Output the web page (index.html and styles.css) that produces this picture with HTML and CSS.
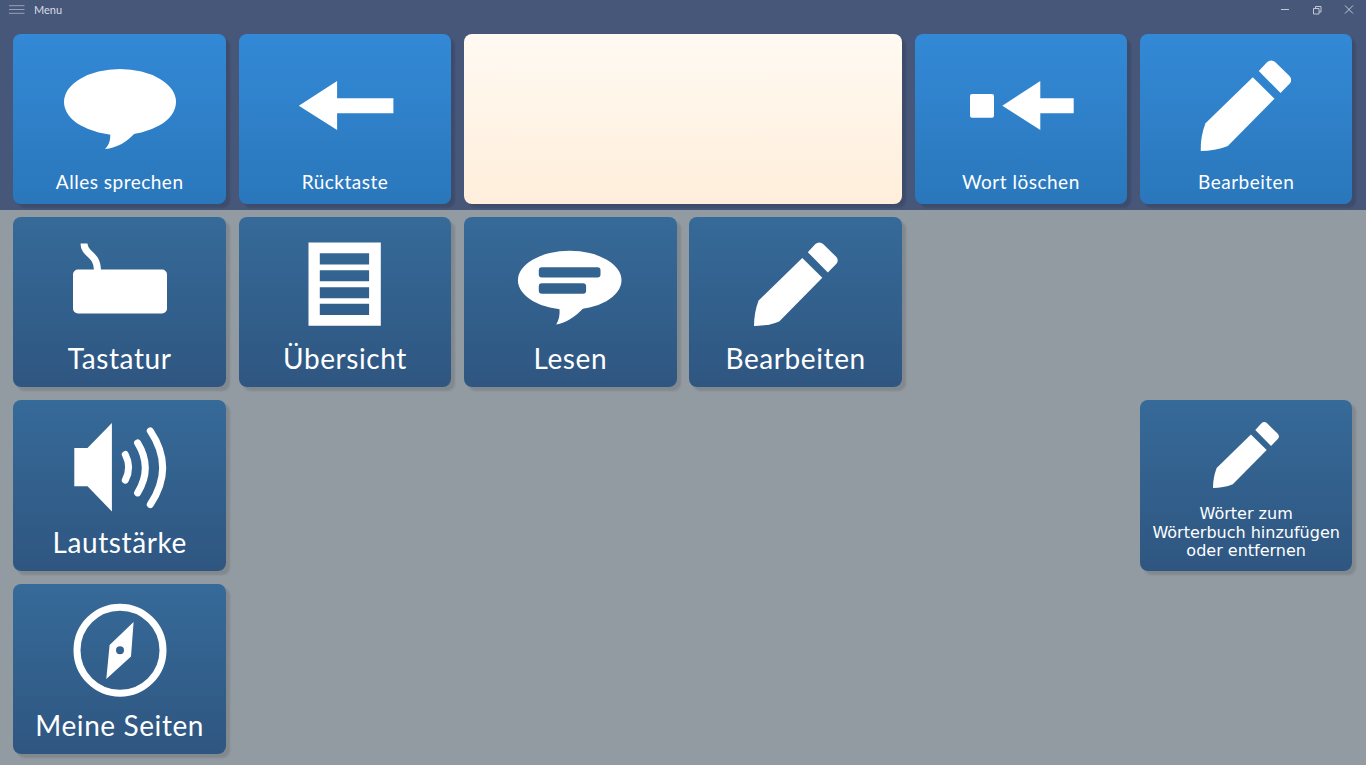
FILE: index.html
```html
<!DOCTYPE html>
<html lang="de">
<head>
    <meta charset="UTF-8">
    <meta name="viewport" content="width=device-width, initial-scale=1.0">
    <title>Menu</title>
    <link rel="stylesheet" href="styles.css">
</head>
<body>
    <svg class="defs" aria-hidden="true">
        <symbol id="pencil" viewBox="0 0 91 91">
            <path d="M66.500 2.200a6 6 0 0 1 8.400 0L89 16a5.500 5.500 0 0 1 .3 7.600L80 33 58.300 11z"/>
            <path d="M52.300 17.300L74 38.700 27.300 86C19 89.500 9 91 0 91c0-9 1.500-19 5-27.700z"/>
        </symbol>
        <symbol id="arrow" viewBox="0 0 95 49">
            <path d="M0 24.700L38.300 0v17.300H94.700v15H38.300V49z"/>
        </symbol>
    </svg>

    <header class="top-band">
        <div class="title-bar">
            <div class="title-left">
                <svg class="hamburger" width="16" height="10" viewBox="0 0 16 10">
                    <path d="M0 .7h15.500M0 4.500h15.500M0 8.300h15.500"/>
                </svg>
                <span class="title-text">Menu</span>
            </div>
            <div class="window-controls">
                <svg width="10" height="10" viewBox="0 0 10 10"><path d="M1 4.500h8"/></svg>
                <svg width="10" height="10" viewBox="0 0 10 10"><path d="M1.500 3.500h5.500v5.500H1.500zM3.500 3.500V1.500H9v5.500H7"/></svg>
                <svg width="10" height="10" viewBox="0 0 10 10"><path d="M1 .5l8 8M9 .5l-8 8"/></svg>
            </div>
        </div>
        <div class="grid top-grid">
            <button class="card bright">
                <svg class="icon-top" viewBox="0 0 130 100">
                    <ellipse cx="65" cy="44" rx="56" ry="33"/>
                    <path d="M55 74C56 82 54 87 50 91 62 90 72 84 81 74z"/>
                </svg>
                <span class="label">Alles sprechen</span>
            </button>
            <button class="card bright">
                <svg class="icon-top" viewBox="0 0 130 100">
                    <use href="#arrow" x="18.800" y="23" width="95" height="49"/>
                </svg>
                <span class="label">Rücktaste</span>
            </button>
            <div class="display"></div>
            <button class="card bright">
                <svg class="icon-top" viewBox="0 0 130 100">
                    <rect x="14" y="36" width="24" height="23.700" rx="2"/>
                    <path d="M46.300 47.700L84.300 23v17.300h33.400v15H84.300V72z"/>
                </svg>
                <span class="label">Wort löschen</span>
            </button>
            <button class="card bright">
                <svg class="icon-top" viewBox="0 0 130 100">
                    <use href="#pencil" x="19.500" y="2" width="91" height="91"/>
                </svg>
                <span class="label">Bearbeiten</span>
            </button>
        </div>
    </header>

    <main class="grid page-grid">
        <button class="card">
            <svg class="icon" viewBox="-5 0 110 84">
                <rect x="3" y="27.500" width="94" height="44" rx="5"/>
                <path class="line flat" d="M14 1.500C14 13 27 11 27.500 28"/>
            </svg>
            <span class="label big">Tastatur</span>
        </button>
        <button class="card">
            <svg class="icon" viewBox="-5 0 110 84">
                <path fill-rule="evenodd" d="M13.500.5h72.300v83.300H13.500zM24.800 11.200h49.300v11.200H24.800zM24.800 28.200h49.300v11H24.800zM24.800 45.200h49.300v11H24.800zM24.800 61.800h49.300v11.200H24.800z"/>
            </svg>
            <span class="label big">Übersicht</span>
        </button>
        <button class="card">
            <svg class="icon" viewBox="-5 0 110 84">
                <path fill-rule="evenodd" d="M-2.100 38.300a51.800 29.500 0 1 0 103.600 0a51.800 29.500 0 1 0-103.600 0zM21.800 25.200h55.700a3 3 0 0 1 3 3v4.300a3 3 0 0 1-3 3H21.800a3 3 0 0 1-3-3v-4.300a3 3 0 0 1 3-3zM21.800 41.200h41.300a3 3 0 0 1 3 3v4.600a3 3 0 0 1-3 3H21.800a3 3 0 0 1-3-3v-4.600a3 3 0 0 1 3-3z"/>
                <path d="M39.500 66C40 73 39 78 36.200 82.500 46 81 55 75 63.500 66z"/>
            </svg>
            <span class="label big">Lesen</span>
        </button>
        <button class="card">
            <svg class="icon" viewBox="-5 0 110 84">
                <use href="#pencil" x="8" y="0" width="84" height="84"/>
            </svg>
            <span class="label big">Bearbeiten</span>
        </button>

        <button class="card row-2">
            <svg class="icon" viewBox="-5 0 110 84">
                <path d="M4.300 22.900h13.200L41.900-2.100v88.600L17.500 61.200H4.300z"/>
                <path class="line" d="M55.300 29.500Q62 42.400 55.300 55.200M67.600 17.900Q83 42.900 67.600 67.900M80.300 5.900Q105 42.700 80.300 79.500"/>
            </svg>
            <span class="label big">Lautstärke</span>
        </button>
        <button class="card row-2 last-col">
            <svg class="icon-small" viewBox="0 0 91 91">
                <use href="#pencil"/>
            </svg>
            <span class="label small">Wörter zum<br>Wörterbuch hinzufügen<br>oder entfernen</span>
        </button>

        <button class="card row-3">
            <svg class="icon" viewBox="-5 0 110 84">
                <circle class="ring" cx="50" cy="42.200" r="43"/>
                <path fill-rule="evenodd" d="M63.600 13.900L39.600 36.900 36.300 70.900 61 48.600zM50 38.200a4 4 0 1 1 0 8a4 4 0 1 1 0-8z"/>
            </svg>
            <span class="label big">Meine Seiten</span>
        </button>
    </main>
</body>
</html>
```

FILE: styles.css
```css
:root {
    --band-color: #47577a;
    --page-color: #939ba2;
    --text-color: #ffffff;
}

* {
    box-sizing: border-box;
}

html, body {
    height: 100%;
}

body {
    margin: 0;
    overflow: hidden;
    background-color: var(--page-color);
    color: var(--text-color);
    font-family: Lato, "Open Sans", sans-serif;
}

.defs {
    display: none;
}

.top-band {
    height: 210px;
    background-color: var(--band-color);
}

.title-bar {
    height: 19px;
    margin-bottom: 1px;
    display: flex;
    align-items: center;
    justify-content: space-between;
}

.title-left {
    display: flex;
    align-items: center;
    gap: 9px;
    padding-left: 9px;
}

.hamburger path {
    fill: none;
    stroke: #98a0b3;
    stroke-width: 1;
}

.title-text {
    font-size: 11px;
    color: #d8dbe2;
}

.window-controls {
    display: flex;
    gap: 22px;
    padding-right: 12px;
}

.window-controls path {
    fill: none;
    stroke: #c3c8d3;
    stroke-width: 1;
}

.grid {
    display: grid;
    grid-template-columns: repeat(6, 212.5px);
    column-gap: 12.8px;
    padding-left: 13.45px;
}

.top-grid {
    grid-template-rows: 170px;
    padding-top: 14px;
}

.page-grid {
    grid-template-rows: repeat(3, 170.3px);
    row-gap: 13px;
    padding-top: 7px;
}

.row-2 {
    grid-row: 2;
    grid-column: 1;
}

.row-2.last-col {
    grid-column: 6;
}

.row-3 {
    grid-row: 3;
    grid-column: 1;
}

.card {
    display: flex;
    flex-direction: column;
    align-items: center;
    padding: 24.500px 0 0;
    border: none;
    border-radius: 8px;
    background: linear-gradient(#366a99, #2f5681);
    box-shadow: 4px 4px 2px rgba(0, 0, 0, 0.12);
    color: var(--text-color);
    font-family: inherit;
    cursor: pointer;
}

.card.bright {
    padding-top: 24px;
    background: linear-gradient(#3389d6, #2a77bb);
}

.card svg {
    display: block;
    flex: none;
    overflow: visible;
    fill: #ffffff;
}

.icon-top {
    width: 130px;
    height: 100px;
}

.icon {
    width: 110px;
    height: 84px;
}

.icon-small {
    width: 66px;
    height: 66px;
    margin-top: -3px;
}

.card svg .line,
.card svg .ring {
    fill: none;
    stroke: #ffffff;
    stroke-width: 7;
    stroke-linecap: round;
}

.card svg .line.flat {
    stroke-linecap: butt;
}

.label {
    display: block;
    margin-top: auto;
    padding-bottom: 10px;
    font-size: 19px;
    line-height: 24px;
    letter-spacing: 0.5px;
    text-align: center;
}

.label.big {
    padding-bottom: 11px;
    font-size: 28px;
    line-height: 36px;
    letter-spacing: 0.6px;
}

.label.small {
    padding-bottom: 10px;
    font-family: "DejaVu Sans", sans-serif;
    font-size: 16px;
    line-height: 18.500px;
    letter-spacing: 0;
}

.display {
    grid-column: span 2;
    border-radius: 8px;
    background: linear-gradient(#fffaf2, #ffeedb);
    box-shadow: 4px 4px 2px rgba(0, 0, 0, 0.12);
}
```
